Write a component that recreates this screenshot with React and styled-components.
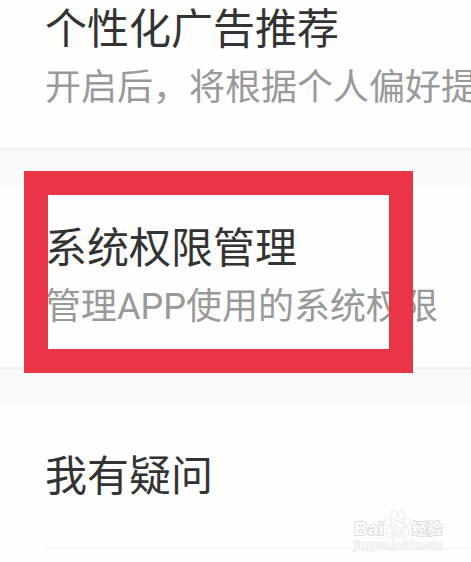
import React from "react";
import styled, { createGlobalStyle } from "styled-components";

const GlobalStyle = createGlobalStyle`
  body {
    margin: 0;
    overflow: hidden;

    color: #333;
    background: #fefefe;

    font-family: Roboto, "Noto Sans CJK SC", sans-serif;
  }
`;

const Page = styled.main`
  display: flex;
  flex-direction: column;
  gap: 36px;

  background: #fafafa;
`;

const Section = styled.section`
  position: relative;

  padding: ${({ $first }) => ($first ? "0" : "33px")} 0 32px 45px;

  background: #fefefe;
  border-bottom: 2px solid #f0f0f0;
`;

const QuestionSection = styled(Section)`
  padding: 42px 0 0 45px;
  border-bottom: none;
`;

const Row = styled.a`
  display: block;

  overflow: hidden;
  white-space: nowrap;

  color: inherit;
  text-decoration: none;
`;

const QuestionRow = styled(Row)`
  padding-bottom: 41px;
  border-bottom: 1px solid #f3f3f3;
`;

const Title = styled.h2`
  margin: 0;

  font-size: 42px;
  font-weight: 400;
  line-height: 60px;
`;

const Description = styled.p`
  margin: 0;

  color: #999;

  font-size: 36px;
  line-height: 56px;
`;

const Highlight = styled.div`
  position: absolute;
  top: -15px;
  right: 58px;
  bottom: -6px;
  left: 24px;

  border: 24px solid #ea3548;

  pointer-events: none;
`;

const Watermark = styled.div`
  position: fixed;
  right: 28px;
  bottom: 11px;

  display: flex;
  flex-direction: column;

  color: #fefefe;

  font-family: "Liberation Sans", "Noto Sans CJK SC", sans-serif;
  font-weight: 700;
  paint-order: stroke fill;
  -webkit-text-stroke: 2px #dcdcdc;
`;

const Brand = styled.div`
  display: flex;
  align-items: flex-end;

  font-size: 19px;
  line-height: 20px;
`;

const BrandSuffix = styled.span`
  margin-left: 1px;

  font-size: 15px;
`;

const Site = styled.div`
  font-size: 11px;
  line-height: 12px;
  font-weight: 400;
  -webkit-text-stroke: 2px #ececec;
`;

const Paw = () => (
  <svg width="27" height="30" viewBox="0 0 28 30" aria-hidden="true">
    <g fill="#fefefe" stroke="#dcdcdc" strokeWidth="1.2">
      <ellipse cx="4" cy="12.500" rx="3" ry="4" transform="rotate(-14 4 12.500)" />
      <ellipse cx="10.3" cy="5.5" rx="3.3" ry="4.600" />
      <ellipse cx="18" cy="5.8" rx="3.3" ry="4.600" transform="rotate(8 18 5.8)" />
      <ellipse cx="24" cy="13" rx="3" ry="4" transform="rotate(12 24 13)" />
      <path d="M14 11.5C10.5 11.5 10 15 7.500 17C4.500 19.500 2 21.500 2.500 25C3 28.500 6 29 9 28.500C12.500 28 15.500 28 19 28.500C23 29 25.500 27.500 25.500 24C25.500 20.500 22.500 19 20.500 16.500C18.500 14 17.500 11.500 14 11.500Z" />
    </g>
    <text
      x="14"
      y="26"
      textAnchor="middle"
      fontSize="13"
      fill="#fefefe"
      stroke="#dcdcdc"
      paintOrder="stroke"
    >
      du
    </text>
  </svg>
);

const App = () => (
  <>
    <GlobalStyle />
    <Page>
      <Section $first>
        <Row href="#ads">
          <Title>个性化广告推荐</Title>
          <Description>开启后，将根据个人偏好提</Description>
        </Row>
      </Section>
      <Section>
        <Row href="#permissions">
          <Title>系统权限管理</Title>
          <Description>管理APP使用的系统权限</Description>
        </Row>
        <Highlight />
      </Section>
      <QuestionSection>
        <QuestionRow href="#questions">
          <Title>我有疑问</Title>
        </QuestionRow>
      </QuestionSection>
    </Page>
    <Watermark>
      <Brand>
        <span>Bai</span>
        <Paw />
        <BrandSuffix>经验</BrandSuffix>
      </Brand>
      <Site>jingyan.baidu.com</Site>
    </Watermark>
  </>
);

export default App;
